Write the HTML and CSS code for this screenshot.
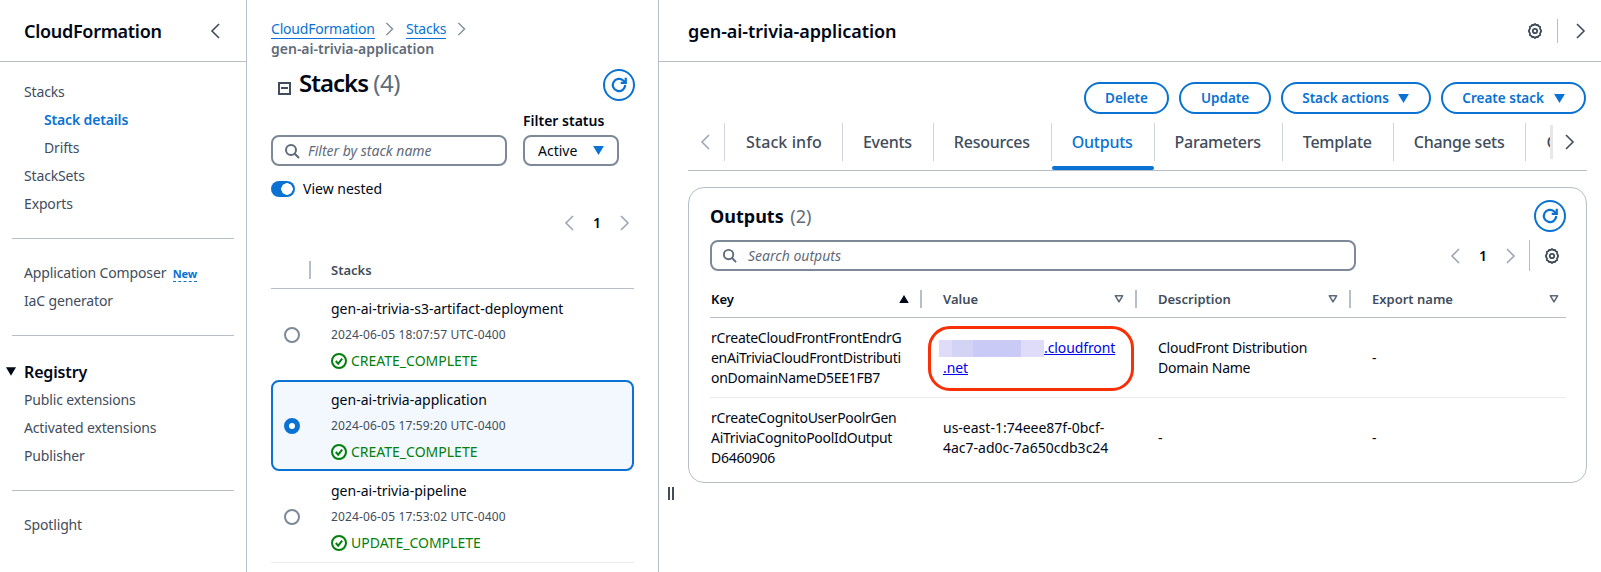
FILE: index.html
```html
<!DOCTYPE html>
<html>
  <head>
    <title>CloudFormation - Stack details</title>
    <meta charset="utf-8" />
    <link rel="stylesheet" href="styles.css">
  </head>
  <body>
    <svg class="defs" width="0" height="0">
      <symbol id="chev-left" viewBox="0 0 16 16"><path d="M11 1 4 8l7 7" fill="none" stroke="currentColor" stroke-width="1.6" /></symbol>
      <symbol id="chev-right" viewBox="0 0 16 16"><path d="M5 1l7 7-7 7" fill="none" stroke="currentColor" stroke-width="1.6" /></symbol>
      <symbol id="refresh" viewBox="0 0 16 16"><path d="M13.5 8a5.5 5.5 0 1 1-1.7-4L14 6" fill="none" stroke="currentColor" stroke-width="2" /><path d="M14 1.5V6H9.5" fill="none" stroke="currentColor" stroke-width="2" /></symbol>
      <symbol id="search" viewBox="0 0 16 16"><circle cx="7" cy="7" r="5" fill="none" stroke="currentColor" stroke-width="2" /><path d="M10.7 10.7 15 15" fill="none" stroke="currentColor" stroke-width="2" /></symbol>
      <symbol id="gear" viewBox="0 0 16 16"><path d="M8 1l1.2 1 1.6-.2.8 1.4 1.5.6-.1 1.6L14.2 8l-1.2 2.6.1 1.6-1.5.6-.8 1.4-1.6-.2L8 15l-1.2-1-1.6.2-.8-1.4-1.5-.6.1-1.6L1.8 8 3 5.4l-.1-1.6 1.5-.6.8-1.4 1.6.2z" fill="none" stroke="currentColor" stroke-width="1.8" stroke-linejoin="round" /><circle cx="8" cy="8" r="2.2" fill="none" stroke="currentColor" stroke-width="1.8" /></symbol>
      <symbol id="ok" viewBox="0 0 16 16"><circle cx="8" cy="8" r="7" fill="none" stroke="currentColor" stroke-width="2" /><path d="M4.8 8 7.2 10.6 11.2 5.6" fill="none" stroke="currentColor" stroke-width="2" /></symbol>
      <symbol id="down" viewBox="0 0 12 10"><path d="M0 0h12L6 10z" fill="currentColor" /></symbol>
      <symbol id="up" viewBox="0 0 12 10"><path d="M0 10h12L6 0z" fill="currentColor" /></symbol>
      <symbol id="down-open" viewBox="0 0 12 10"><path d="M1.5 1h9L6 8.5z" fill="none" stroke="currentColor" stroke-width="2" stroke-linejoin="round" /></symbol>
    </svg>

    <div class="app">
      <nav class="sidebar">
        <div class="side-head">
          <span class="side-title">CloudFormation</span>
          <svg class="icon side-close"><use href="#chev-left" /></svg>
        </div>
        <ul class="nav nav-first">
          <li>Stacks</li>
          <li class="sub active">Stack details</li>
          <li class="sub">Drifts</li>
          <li>StackSets</li>
          <li>Exports</li>
        </ul>
        <hr class="side-rule" />
        <ul class="nav">
          <li>Application Composer <span class="new">New</span></li>
          <li>IaC generator</li>
        </ul>
        <hr class="side-rule" />
        <ul class="nav nav-registry">
          <li class="nav-group"><svg class="group-arrow"><use href="#down" /></svg>Registry</li>
          <li>Public extensions</li>
          <li>Activated extensions</li>
          <li>Publisher</li>
        </ul>
        <hr class="side-rule" />
        <ul class="nav">
          <li>Spotlight</li>
        </ul>
      </nav>

      <section class="stacks">
        <div class="crumbs">
          <a href="#">CloudFormation</a>
          <svg class="icon crumb-sep"><use href="#chev-right" /></svg>
          <a href="#">Stacks</a>
          <svg class="icon crumb-sep"><use href="#chev-right" /></svg>
          <div class="crumb-current">gen-ai-trivia-application</div>
        </div>

        <div class="stacks-head">
          <span class="collapse-box"></span>
          <h1>Stacks <span class="count">(4)</span></h1>
          <button class="round-btn"><svg class="icon"><use href="#refresh" /></svg></button>
        </div>

        <div class="filters">
          <div class="input filter-input">
            <svg class="icon"><use href="#search" /></svg>
            <span>Filter by stack name</span>
          </div>
          <div>
            <div class="filter-label">Filter status</div>
            <div class="input filter-select">
              <span>Active</span>
              <svg class="caret"><use href="#down" /></svg>
            </div>
          </div>
        </div>

        <div class="toggle-row">
          <span class="toggle"></span>
          View nested
        </div>

        <div class="pager stacks-pager">
          <svg class="icon"><use href="#chev-left" /></svg>
          <b>1</b>
          <svg class="icon"><use href="#chev-right" /></svg>
        </div>

        <div class="list-head"><span>Stacks</span></div>

        <div class="stack-row">
          <span class="radio"></span>
          <div>
            <div class="stack-name">gen-ai-trivia-s3-artifact-deployment</div>
            <div class="stack-date">2024-06-05 18:07:57 UTC-0400</div>
            <div class="stack-status"><svg class="icon"><use href="#ok" /></svg>CREATE_COMPLETE</div>
          </div>
        </div>
        <div class="stack-row selected">
          <span class="radio"></span>
          <div>
            <div class="stack-name">gen-ai-trivia-application</div>
            <div class="stack-date">2024-06-05 17:59:20 UTC-0400</div>
            <div class="stack-status"><svg class="icon"><use href="#ok" /></svg>CREATE_COMPLETE</div>
          </div>
        </div>
        <div class="stack-row">
          <span class="radio"></span>
          <div>
            <div class="stack-name">gen-ai-trivia-pipeline</div>
            <div class="stack-date">2024-06-05 17:53:02 UTC-0400</div>
            <div class="stack-status"><svg class="icon"><use href="#ok" /></svg>UPDATE_COMPLETE</div>
          </div>
        </div>
        <div class="list-end"></div>

        <div class="resizer"><i></i><i></i></div>
      </section>

      <main class="detail">
        <header class="detail-head">
          <span class="detail-title">gen-ai-trivia-application</span>
          <div class="detail-tools">
            <svg class="icon"><use href="#gear" /></svg>
            <span class="tool-sep"></span>
            <svg class="icon"><use href="#chev-right" /></svg>
          </div>
        </header>

        <div class="actions">
          <button class="btn">Delete</button>
          <button class="btn">Update</button>
          <button class="btn">Stack actions <svg class="caret"><use href="#down" /></svg></button>
          <button class="btn">Create stack <svg class="caret"><use href="#down" /></svg></button>
        </div>

        <div class="tabs">
          <div class="tab-prev"><svg class="icon"><use href="#chev-left" /></svg></div>
          <div class="tab-list">
            <span class="tab tab-first">Stack info</span>
            <span class="tab">Events</span>
            <span class="tab">Resources</span>
            <span class="tab active">Outputs</span>
            <span class="tab">Parameters</span>
            <span class="tab">Template</span>
            <span class="tab">Change sets</span>
            <span class="tab">Git sync</span>
          </div>
          <div class="tab-next"><svg class="icon"><use href="#chev-right" /></svg></div>
        </div>

        <div class="card">
          <div class="card-head">
            <h2>Outputs <span class="count">(2)</span></h2>
            <button class="round-btn"><svg class="icon"><use href="#refresh" /></svg></button>
          </div>
          <div class="card-tools">
            <div class="input search-input">
              <svg class="icon"><use href="#search" /></svg>
              <span>Search outputs</span>
            </div>
            <div class="pager">
              <svg class="icon"><use href="#chev-left" /></svg>
              <b>1</b>
              <svg class="icon"><use href="#chev-right" /></svg>
              <span class="tool-sep"></span>
              <svg class="icon gear"><use href="#gear" /></svg>
            </div>
          </div>

          <div class="grid grid-head">
            <div class="th key">Key <svg class="sort sort-on"><use href="#up" /></svg></div>
            <div class="th">Value <svg class="sort"><use href="#down-open" /></svg></div>
            <div class="th">Description <svg class="sort"><use href="#down-open" /></svg></div>
            <div class="th last">Export name <svg class="sort"><use href="#down-open" /></svg></div>
          </div>
          <div class="grid grid-row">
            <div class="td key">rCreateCloudFrontFrontEndrG<br />enAiTriviaCloudFrontDistributi<br />onDomainNameD5EE1FB7</div>
            <div class="td value">
              <a href="#"><span class="blur"></span>.cloudfront<br />.net</a>
              <span class="ring"></span>
            </div>
            <div class="td desc">CloudFront Distribution Domain Name</div>
            <div class="td">-</div>
          </div>
          <div class="grid grid-row row-last">
            <div class="td key">rCreateCognitoUserPoolrGen<br />AiTriviaCognitoPoolIdOutput<br />D6460906</div>
            <div class="td">us-east-1:74eee87f-0bcf-4ac7-ad0c-7a650cdb3c24</div>
            <div class="td">-</div>
            <div class="td">-</div>
          </div>
        </div>
      </main>
    </div>
  </body>
</html>
```

FILE: styles.css
```css
* {
  box-sizing: border-box;
}

html,
body {
  margin: 0;
  height: 572px;
  overflow: hidden;
  background: #fff;
}

body {
  font-family: "Noto Sans", sans-serif;
  font-size: 14px;
  line-height: 20px;
  color: #000716;
}

.defs {
  position: absolute;
}

.app {
  display: flex;
  height: 572px;
}

.icon {
  width: 16px;
  height: 16px;
  flex: none;
}

h1,
h2 {
  margin: 0;
}

a {
  color: #0972d3;
}

button {
  font-family: inherit;
  background: #fff;
  cursor: pointer;
}

.count {
  font-weight: 400;
  color: #5f6b7a;
}

/* left navigation */
.sidebar {
  width: 247px;
  flex: none;
  border-right: 1px solid #b6bec9;
  color: #414d5c;
}

.side-head {
  height: 62px;
  padding: 0 22px 0 24px;
  display: flex;
  align-items: center;
  justify-content: space-between;
  border-bottom: 1px solid #b6bec9;
}

.side-title {
  font-size: 18px;
  font-weight: 600;
  letter-spacing: -0.3px;
  color: #000716;
}

.side-close {
  color: #414d5c;
}

.nav {
  list-style: none;
  margin: 0;
  padding: 20px 0;
  letter-spacing: -0.15px;
}

.nav-first {
  padding-top: 16px;
}

.nav-registry {
  padding-top: 22px;
}

.nav li {
  height: 28px;
  line-height: 28px;
  padding-left: 24px;
  position: relative;
}

.nav .sub {
  padding-left: 44px;
}

.nav .active {
  color: #0972d3;
  font-weight: 600;
}

.nav .nav-group {
  font-size: 16px;
  font-weight: 600;
  color: #000716;
}

.group-arrow {
  position: absolute;
  left: 6px;
  top: 9px;
  width: 10px;
  height: 9px;
}

.new {
  font-size: 11px;
  font-weight: 700;
  color: #0972d3;
  margin-left: 3px;
  border-bottom: 1px dashed #0972d3;
}

.side-rule {
  margin: 0 12px;
  border: 0;
  border-top: 1px solid #b6bec9;
}

/* stacks column */
.stacks {
  width: 412px;
  flex: none;
  padding: 19px 24px 0 24px;
  border-right: 1px solid #b6bec9;
  position: relative;
}

.crumbs {
  height: 40px;
}

.crumbs a {
  text-decoration: none;
  letter-spacing: -0.2px;
  border-bottom: 1px solid #0972d3;
}

.crumb-sep {
  width: 14px;
  height: 14px;
  margin: 0 6px 0 4px;
  color: #7d8998;
  vertical-align: -2px;
}

.crumb-current {
  font-weight: 600;
  color: #5f6b7a;
}

.stacks-head {
  margin-top: 10px;
  height: 32px;
  display: flex;
  align-items: center;
  padding-left: 7px;
}

.collapse-box {
  width: 13px;
  height: 13px;
  border: 2px solid #414d5c;
  margin-right: 8px;
  position: relative;
  top: 3px;
  background: linear-gradient(#414d5c, #414d5c) center / 7px 2px no-repeat;
}

h1 {
  font-size: 24px;
  font-weight: 600;
  line-height: 30px;
  letter-spacing: -1px;
  flex: 1;
  position: relative;
  top: -2px;
}

h1 .count {
  letter-spacing: -0.5px;
}

.round-btn {
  width: 32px;
  height: 32px;
  padding: 0;
  border: 2px solid #0972d3;
  border-radius: 50%;
  color: #0972d3;
  display: flex;
  align-items: center;
  justify-content: center;
}

.round-btn .icon {
  width: 18px;
  height: 18px;
}

.stacks-head .round-btn {
  margin-right: -1px;
}

.filters {
  margin-top: 10px;
  display: flex;
  align-items: flex-end;
  gap: 16px;
}

.filter-label {
  font-weight: 600;
  margin-bottom: 4px;
}

.input {
  height: 31px;
  border: 2px solid #7d8998;
  border-radius: 8px;
  display: flex;
  align-items: center;
}

.filter-input {
  width: 236px;
  padding-left: 11px;
  gap: 8px;
  font-style: italic;
  color: #5f6b7a;
}

.filter-select {
  width: 96px;
  padding: 0 13px;
  justify-content: space-between;
  color: #000716;
}

.caret {
  width: 11px;
  height: 9px;
  color: #0972d3;
}

.toggle-row {
  margin-top: 13px;
  height: 20px;
  display: flex;
  align-items: center;
  gap: 8px;
}

.toggle {
  width: 24px;
  height: 16px;
  border-radius: 8px;
  background: radial-gradient(circle at 16px 8px, #fff 5.5px, #0972d3 6px);
}

.pager {
  display: flex;
  align-items: center;
  justify-content: flex-end;
  color: #9ba7b6;
}

.pager b {
  color: #000716;
  font-size: 14px;
  font-weight: 600;
  margin: 0 15px;
}

.stacks-pager {
  margin-top: 14px;
  height: 20px;
  padding-right: 2px;
}

.list-head {
  margin-top: 19px;
  height: 37px;
  border-bottom: 1px solid #b6bec9;
  padding: 9px 0 0 38px;
  display: flex;
}

.list-head span {
  height: 18px;
  line-height: 18px;
  padding-left: 20px;
  border-left: 2px solid #b6bec9;
  font-weight: 600;
  font-size: 13px;
  color: #414d5c;
}

.stack-row {
  height: 91px;
  border: 2px solid transparent;
  border-radius: 8px;
  padding: 0 0 0 11px;
  display: flex;
  align-items: center;
}

.stack-row > div {
  margin-left: 31px;
}

.stack-row.selected {
  border-color: #0972d3;
  background: #f2f8fd;
}

.radio {
  width: 16px;
  height: 16px;
  flex: none;
  border: 2px solid #7d8998;
  border-radius: 50%;
  background: #fff;
}

.selected .radio {
  border: 5px solid #0972d3;
}

.stack-name {
  line-height: 26px;
}

.stack-date {
  line-height: 26px;
  font-size: 12px;
  letter-spacing: 0.15px;
  color: #414d5c;
}

.stack-status {
  line-height: 26px;
  color: #037f0c;
  display: flex;
  align-items: center;
  gap: 4px;
}

.list-end {
  border-top: 1px solid #e9ebed;
}

.resizer {
  position: absolute;
  left: 421px;
  top: 487px;
  display: flex;
  gap: 2px;
}

.resizer i {
  width: 2px;
  height: 13px;
  background: #414d5c;
}

/* right side */
.detail {
  flex: 1;
  min-width: 0;
}

.detail-head {
  height: 62px;
  padding: 0 13px 0 29px;
  display: flex;
  align-items: center;
  justify-content: space-between;
  border-bottom: 1px solid #b6bec9;
}

.detail-title {
  font-size: 18px;
  font-weight: 600;
  letter-spacing: -0.05px;
}

.detail-tools {
  display: flex;
  align-items: center;
  color: #414d5c;
}

.tool-sep {
  width: 1px;
  height: 24px;
  background: #b6bec9;
  margin: 0 14px;
}

.actions {
  margin-top: 20px;
  padding-right: 15px;
  display: flex;
  justify-content: flex-end;
  gap: 10px;
}

.btn {
  height: 32px;
  padding: 0 19.5px;
  border: 2px solid #0972d3;
  border-radius: 20px;
  color: #0972d3;
  font-size: 13.5px;
  font-weight: 600;
  line-height: 18px;
}

.btn .caret {
  margin-left: 6px;
}

.tabs {
  margin: 9px 14px 0 29px;
  height: 48px;
  display: flex;
  border-bottom: 1px solid #b6bec9;
}

.tab-prev {
  width: 36px;
  height: 38px;
  flex: none;
  display: flex;
  align-items: center;
  padding-left: 10px;
  color: #9ba7b6;
}

.tab-list {
  flex: 1;
  display: flex;
  overflow: hidden;
  white-space: nowrap;
}

.tab {
  height: 47px;
  padding: 0 21px;
  line-height: 38px;
  font-size: 16px;
  font-weight: 500;
  letter-spacing: -0.25px;
  color: #414d5c;
  flex: none;
  position: relative;
  background: linear-gradient(#d1d5db, #d1d5db) left top / 1px 38px no-repeat;
}

.tab-first {
  padding: 0 20px 0 22px;
  letter-spacing: 0.1px;
}

.tab.active {
  color: #0972d3;
}

.tab.active::after {
  content: "";
  position: absolute;
  left: 1px;
  right: 0;
  bottom: 0;
  height: 4px;
  border-radius: 2px;
  background: #0972d3;
}

.tab-next {
  width: 37px;
  height: 34px;
  margin-top: 2px;
  flex: none;
  display: flex;
  align-items: center;
  padding-left: 8px;
  color: #414d5c;
  border-left: 3px solid #e5e7ea;
}

.card {
  margin: 16px 14px 0 29px;
  height: 296px;
  padding: 12px 20px 0 21px;
  border: 1px solid #b6bec9;
  border-radius: 16px;
}

.card-head {
  height: 32px;
  display: flex;
  align-items: center;
  justify-content: space-between;
}

h2 {
  font-size: 18px;
  line-height: 24px;
}

h2 .count {
  margin-left: 2px;
}

.card-tools {
  margin-top: 8px;
  display: flex;
  justify-content: space-between;
}

.search-input {
  width: 646px;
  padding-left: 10px;
  gap: 11px;
  font-style: italic;
  color: #5f6b7a;
}

.search-input .icon {
  width: 15px;
  height: 15px;
}

.gear {
  color: #414d5c;
}

.card-tools .pager {
  padding-right: 6px;
}

.card-tools .tool-sep {
  height: 31px;
  margin: 0 14px 0 11px;
}

.grid {
  display: grid;
  grid-template-columns: 212px 215px 214px 215px;
  width: 856px;
  border-bottom: 1px solid #e9ebed;
}

.grid-head {
  margin-top: 10px;
  height: 37px;
  border-bottom-color: #b6bec9;
  align-items: center;
}

.th {
  height: 18px;
  line-height: 18px;
  padding: 0 11px 0 21px;
  border-right: 2px solid #b6bec9;
  font-weight: 600;
  font-size: 13px;
  color: #414d5c;
  display: flex;
  align-items: center;
  justify-content: space-between;
}

.th.key {
  padding-left: 1px;
  color: #000716;
}

.th.last {
  padding-right: 7px;
  border-right: 0;
}

.sort {
  width: 10px;
  height: 8px;
  color: #5f6b7a;
}

.sort-on {
  color: #000716;
}

.grid-row {
  height: 80px;
  align-items: center;
}

.row-last {
  border-bottom: 0;
}

.td {
  padding: 0 20px 0 21px;
  position: relative;
}

.td.key {
  padding: 0 0 0 1px;
  white-space: nowrap;
  letter-spacing: -0.28px;
}

.td.desc {
  letter-spacing: -0.25px;
}

.td.value {
  letter-spacing: -0.1px;
}

.td.value a {
  color: #0000ee;
}

.blur {
  display: inline-block;
  width: 105px;
  height: 17px;
  margin-left: -4px;
  vertical-align: -4px;
  background: linear-gradient(90deg, #dedcf8 0 12%, #d3d3f6 12% 32%, #c9caf5 32% 78%, #dedcf8 78% 100%);
}

.ring {
  position: absolute;
  left: 6px;
  top: -12px;
  width: 206px;
  height: 65px;
  border: 3.5px solid #f92f06;
  border-radius: 22px;
}
```
